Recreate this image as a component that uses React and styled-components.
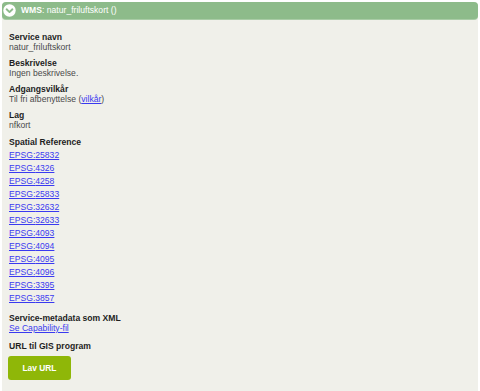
import React from "react";
import styled, { createGlobalStyle } from "styled-components";

const Global = createGlobalStyle`
  html, body { margin: 0; padding: 0; background: #ffffff; }
  body { font-family: "Liberation Sans", Arial, sans-serif; }
`;

const Page = styled.div`
  padding: 2px 2px 0 2px;
  height: 391px;
  box-sizing: border-box;
`;

const Panel = styled.div`
  background: #f0f0ea;
  height: 100%;
  border-radius: 4px 4px 0 0;
  display: flex;
  flex-direction: column;
`;

const Header = styled.div`
  height: 17px;
  background: #8dbb8a;
  border-radius: 4px;
  display: flex;
  align-items: center;
  gap: 5px;
  padding-left: 1px;
  color: #ffffff;
  font-size: 8.6px;
  line-height: 17px;
  box-shadow: 0 1px 0 #a9cca6;
`;

const Strong = styled.span`
  font-weight: bold;
`;

const Content = styled.div`
  padding: 13px 7px 0 7px;
  display: flex;
  flex-direction: column;
`;

const Section = styled.div`
  display: flex;
  flex-direction: column;
  margin-bottom: ${(p) => p.$mb ?? 6}px;
`;

const Title = styled.div`
  font-weight: bold;
  font-size: 8.6px;
  line-height: 10px;
  color: #1e1e1e;
`;

const Value = styled.div`
  font-size: 8.6px;
  line-height: 10px;
  color: #4a4a4a;
`;

const Link = styled.a`
  color: #3a3af0;
  text-decoration: underline;
  cursor: pointer;
`;

const LinkList = styled.div`
  display: flex;
  flex-direction: column;
  margin-top: 2px;
`;

const ListLink = styled(Link)`
  display: block;
  font-size: 8.6px;
  line-height: 13px;
  width: fit-content;
`;

const Button = styled.button`
  margin-top: 5px;
  margin-left: -1px;
  width: 63px;
  height: 24px;
  border: none;
  border-radius: 3px;
  background: #8fb708;
  color: #ffffff;
  font-family: "Liberation Sans", Arial, sans-serif;
  font-weight: bold;
  font-size: 8.4px;
  cursor: pointer;
  padding: 0;
`;

const ChevronCircle = () => (
  <svg width="13" height="13" viewBox="0 0 13 13">
    <circle cx="6.5" cy="6.5" r="6.2" fill="#ffffff" />
    <path d="M3.6 5.3 L6.5 8.1 L9.4 5.3" fill="none" stroke="#8dbb8a" strokeWidth="1.9" strokeLinecap="round" strokeLinejoin="round" />
  </svg>
);

const epsg = ["25832", "4326", "4258", "25833", "32632", "32633", "4093", "4094", "4095", "4096", "3395", "3857"];

export default function App() {
  return (
    <>
      <Global />
      <Page>
        <Panel>
          <Header>
            <ChevronCircle />
            <span>
              <Strong>WMS</Strong>: natur_friluftskort ()
            </span>
          </Header>
          <Content>
            <Section>
              <Title>Service navn</Title>
              <Value>natur_friluftskort</Value>
            </Section>
            <Section>
              <Title>Beskrivelse</Title>
              <Value>Ingen beskrivelse.</Value>
            </Section>
            <Section>
              <Title>Adgangsvilkår</Title>
              <Value>
                Til fri afbenyttelse (<Link>vilkår</Link>)
              </Value>
            </Section>
            <Section $mb={7}>
              <Title>Lag</Title>
              <Value>nfkort</Value>
            </Section>
            <Section $mb={8}>
              <Title>Spatial Reference</Title>
              <LinkList>
                {epsg.map((c) => (
                  <ListLink key={c}>EPSG:{c}</ListLink>
                ))}
              </LinkList>
            </Section>
            <Section $mb={8}>
              <Title>Service-metadata som XML</Title>
              <Value>
                <Link>Se Capability-fil</Link>
              </Value>
            </Section>
            <Section $mb={0}>
              <Title>URL til GIS program</Title>
              <Button>Lav URL</Button>
            </Section>
          </Content>
        </Panel>
      </Page>
    </>
  );
}
